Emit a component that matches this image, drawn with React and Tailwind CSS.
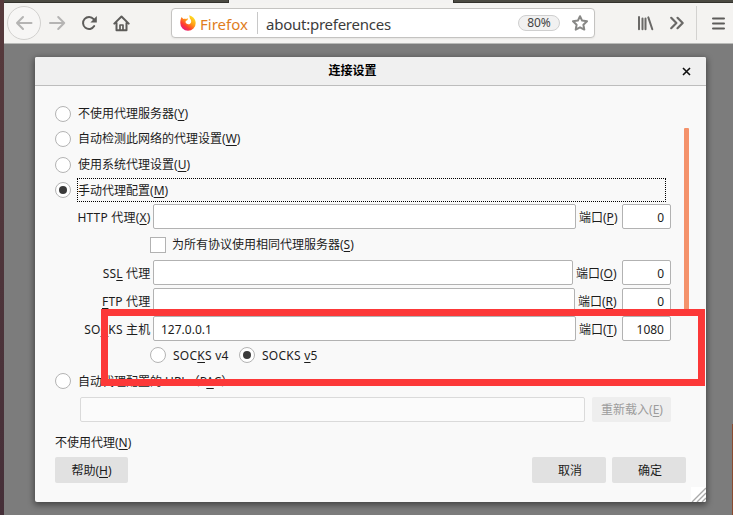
import React from 'react';

const Key = ({ children }) => (
  <span className="underline decoration-1 underline-offset-2 [text-decoration-skip-ink:none]">{children}</span>
);

const Radio = ({ checked }) => (
  <span className="flex h-4 w-4 shrink-0 items-center justify-center rounded-full border border-[#b4b4b4] bg-white">
    {checked && <span className="h-2 w-2 rounded-full bg-[#3a3a3a]" />}
  </span>
);

const Option = ({ text, k, checked }) => (
  <div className="flex h-[25px] items-center pl-5">
    <Radio checked={checked} />
    <span
      className={
        checked
          ? 'ml-1.5 flex h-6 w-[589px] items-center border border-dotted border-black pt-px'
          : 'ml-1.5 flex h-6 items-center pl-px'
      }
    >
      <span>{text}(<Key>{k}</Key>)</span>
    </span>
  </div>
);

const ProxyRow = ({ label, port, value, host, gap }) => (
  <div className="flex h-[25px] items-center pr-[35px]">
    <span className="w-[115.5px] shrink-0 pt-0.5 text-right tracking-[0.2px] whitespace-nowrap">{label}</span>
    <span className="ml-[2.5px] flex h-[25px] flex-1 items-center rounded-[2px] border border-[#b2b2b2] bg-white pt-0.5 pl-[7px]">{host}</span>
    <span className={gap}>端口(<Key>{port}</Key>)</span>
    <span className="flex h-[25px] w-[49px] items-center justify-end rounded-[2px] border border-[#b2b2b2] bg-white pt-0.5 pr-1.5">{value}</span>
  </div>
);

const portGap = 'w-[46px] shrink-0 pt-0.5 pl-[3px] whitespace-nowrap';

export default function App() {
  return (
    <div className="relative flex h-[515px] w-[733px] overflow-hidden bg-[#7c7c7c] font-['Noto_Sans','Noto_Sans_CJK_SC',sans-serif] text-[12px] leading-4 text-[#1c1c1c]">
      <div className="w-1 shrink-0 bg-linear-to-b from-[#573a3c] to-[#452f38]" />
      <div className="flex flex-1 flex-col">
        <div className="flex h-[3px] shrink-0 justify-between bg-[#f3f2f1]">
          <div className="w-[225px] border-r border-b border-[#33322d] bg-[#4b4a42]" />
          <div className="w-[280px] border-b border-l border-[#33322d] bg-[#4b4a42]" />
        </div>

        <header className="flex h-[41px] shrink-0 items-center border-b border-[#b9bab8] bg-[#f4f3f1]">
          <div className="ml-[3px] flex h-[34px] w-[34px] items-center justify-center rounded-full border border-[#d2d1cf] bg-[#f7f6f5]">
            <svg width="18" height="16" viewBox="0 0 18 16" fill="none" stroke="#b5b4b3" strokeWidth="2" strokeLinecap="round" strokeLinejoin="round">
              <path d="M16.5 8H2M8 2L2 8l6 6" />
            </svg>
          </div>
          <svg className="ml-[7px]" width="18" height="16" viewBox="0 0 18 16" fill="none" stroke="#b5b4b3" strokeWidth="2" strokeLinecap="round" strokeLinejoin="round">
            <path d="M2 8h14.2M10.2 2l6 6-6 6" />
          </svg>
          <svg className="ml-[15px]" width="17" height="16" viewBox="0 0 17 16" fill="none" stroke="#5d5c5a" strokeWidth="2">
            <path d="M13.2 11.1A6 6 0 1 1 12.6 4.1" strokeLinecap="round" />
            <path d="M15.8 1v6.4H9.4z" fill="#5d5c5a" stroke="none" />
          </svg>
          <svg className="ml-[15px]" width="17" height="17" viewBox="0 0 17 17" fill="none" stroke="#5d5c5a" strokeWidth="2" strokeLinecap="round" strokeLinejoin="round">
            <path d="M1.3 8.6L8.5 1.5l7.2 7.1M3.5 8v7.2h10V8" />
            <path d="M7 15V10h3v5" strokeWidth="1.7" />
          </svg>

          <div className="ml-[41px] flex h-[30px] w-[424px] items-center rounded-[4px] border border-[#c4c3c1] bg-white shadow-[0_1px_2px_rgba(0,0,0,0.06)]">
            <svg className="ml-2" width="16" height="16" viewBox="0 0 16 16">
              <defs>
                <linearGradient id="fox" x1="0.85" y1="0.1" x2="0.2" y2="0.95">
                  <stop offset="0" stopColor="#ffe226" />
                  <stop offset="0.4" stopColor="#ff9a16" />
                  <stop offset="0.72" stopColor="#ff3b30" />
                  <stop offset="1" stopColor="#e31587" />
                </linearGradient>
              </defs>
              <path d="M1.6 1.9L3.3 4C4.3 3.5 5.3 3.6 6 4.1L8 3.3 7.5 5.1 5.8 6.1 5.5 7.3c.9 2 3 2.5 4.6 1.4 1.8-1.3 1.3-4-.2-5.2L9.2.3c3.2.9 6.4 3.5 6.5 7.7A7.7 7.7 0 0 1 8 15.8 7.7 7.7 0 0 1 .3 8C.2 5.6.8 3.4 1.6 1.9z" fill="url(#fox)" />
            </svg>
            <span className="ml-1 w-[49px] pt-px text-[15px] leading-5 text-[#e07d1c]">Firefox</span>
            <span className="ml-2 h-[22px] w-px bg-[#c8c8c8]" />
            <span className="ml-2 pt-px text-[15px] leading-5 tracking-[-0.25px] text-[#3c3c3c]">about:preferences</span>
            <span className="mr-3 ml-auto flex h-4 w-[42px] items-center justify-center rounded-full border border-[#cfcfcf] bg-[#f1f1f1] text-[12px] text-[#444]">80%</span>
            <svg className="mr-[6px]" width="16" height="16" viewBox="0 0 16 16" fill="none" stroke="#888886" strokeWidth="2" strokeLinejoin="round">
              <path d="M8 1.2l2.1 4.4 4.9.7-3.6 3.4.9 4.9L8 12.3l-4.3 2.3.9-4.9L1 6.3l4.9-.7z" />
            </svg>
          </div>

          <svg className="ml-[42px]" width="17" height="16" viewBox="0 0 17 16" fill="none" stroke="#6a6967" strokeWidth="2" strokeLinecap="round">
            <path d="M2 2v12.2M5.5 3.5v10.7M8.5 3.5v10.7M11.3 2.4l4 11.8" />
          </svg>
          <svg className="ml-[15px]" width="16" height="14" viewBox="0 0 16 14" fill="none" stroke="#6a6967" strokeWidth="2.2" strokeLinecap="round" strokeLinejoin="round">
            <path d="M2.2 1.8L7.4 7l-5.2 5.2M8.5 1.8L13.7 7l-5.2 5.2" />
          </svg>
          <span className="ml-[11px] h-[34px] w-px bg-[#d3d2d0]" />
          <svg className="ml-[15px]" width="13" height="13" viewBox="0 0 13 13" stroke="#5d5c5a" strokeWidth="2" strokeLinecap="round">
            <path d="M1 1.5h11M1 6.5h11M1 11.5h11" />
          </svg>
        </header>

        <main className="relative flex-1 pt-[13px] pl-[31px]">
          <section className="flex h-[445px] w-[671px] flex-col overflow-hidden rounded-[2px] bg-[#f9f9f9] shadow-[0_2px_6px_1px_rgba(0,0,0,0.45)]">
            <div className="flex h-[29px] shrink-0 items-center border-b border-[#bdbdbd] bg-[#f0f0f0]">
              <span className="flex-1 pr-3 text-center font-bold text-black">连接设置</span>
              <svg className="mr-[15px]" width="9" height="9" viewBox="0 0 9 9" stroke="#111" strokeWidth="1.6">
                <path d="M1 1l7 7M8 1L1 8" />
              </svg>
            </div>

            <div className="flex flex-col pt-[15px]">
              <div className="flex flex-col gap-[0.5px]">
                <Option text="不使用代理服务器" k="Y" />
                <Option text="自动检测此网络的代理设置" k="W" />
                <Option text="使用系统代理设置" k="U" />
                <Option text="手动代理配置" k="M" checked />
              </div>
              <div className="mt-[1.5px] flex flex-col">
                <ProxyRow label={<>HTTP 代理(<Key>X</Key>)</>} port="P" value="0" gap={portGap} />
                <div className="flex h-[31px] items-center pl-[115px]">
                  <span className="h-4 w-4 border border-[#b2b2b2] bg-white" />
                  <span className="ml-1.5 pt-px">为所有协议使用相同代理服务器(<Key>S</Key>)</span>
                </div>
                <div className="flex flex-col gap-[3px]">
                  <ProxyRow label={<>SS<Key>L</Key> 代理</>} port="O" value="0" gap="w-[49px] shrink-0 pt-0.5 pl-[3px] whitespace-nowrap" />
                  <ProxyRow label={<><Key>F</Key>TP 代理</>} port="R" value="0" gap="w-[47px] shrink-0 pt-0.5 pl-[3px] whitespace-nowrap" />
                  <ProxyRow label={<>SO<Key>C</Key>KS 主机</>} port="T" value="1080" host="127.0.0.1" gap={portGap} />
                </div>
              </div>
              <div className="mt-px flex h-[26px] items-center pl-[115px]">
                <Radio />
                <span className="ml-[7px] w-[66px] pt-0.5 tracking-[0.25px]">SOC<Key>K</Key>S v4</span>
                <Radio checked />
                <span className="ml-[7px] pt-0.5 tracking-[0.25px]">SOCKS <Key>v</Key>5</span>
              </div>
              <div className="flex h-[25px] items-center pt-px pl-5">
                <Radio />
                <span className="ml-[7px] pt-px">自动代理配置的 URL（P<Key>A</Key>C）</span>
              </div>
              <div className="mt-1 flex h-[25px] gap-[7px] pr-[35px] pl-[45px]">
                <span className="flex-1 rounded-[2px] border border-[#dadada] bg-[#fbfbfb]" />
                <button className="w-[79px] rounded-[2px] bg-[#eeeeee] pt-px pl-px text-[#9c9c9c]">重新载入(<Key>E</Key>)</button>
              </div>
              <div className="mt-[13px] pl-5">不使用代理(<Key>N</Key>)</div>
              <div className="mt-1.5 flex h-[26px] gap-1.5 pr-5 pl-5">
                <button className="mr-auto w-[73px] rounded-[2px] bg-[#e1e1e1] pt-px">帮助(<Key>H</Key>)</button>
                <button className="w-[74px] rounded-[2px] bg-[#e1e1e1] pt-px pl-0.5">取消</button>
                <button className="w-[74px] rounded-[2px] bg-[#e1e1e1] pt-px pl-0.5">确定</button>
              </div>
              <svg className="mt-1 ml-auto shrink-0 bg-white" width="15" height="15" viewBox="0 0 15 15" stroke="#a9a9a9" strokeWidth="1.4">
                <path d="M1 15L15 1M6 15l9-9M11 15l4-4" />
              </svg>
            </div>
          </section>
          <div className="absolute top-[84px] left-[680px] h-[184px] w-[5px] rounded-t-[1px] bg-[#f4926b]" />
          <div className="absolute top-[265px] left-[97px] h-[77px] w-[604px] border-7 border-[#fc3838]" />
          <div className="absolute right-0 bottom-0 h-[91px] w-px bg-[#8b4b30]" />
        </main>
      </div>
    </div>
  );
}
